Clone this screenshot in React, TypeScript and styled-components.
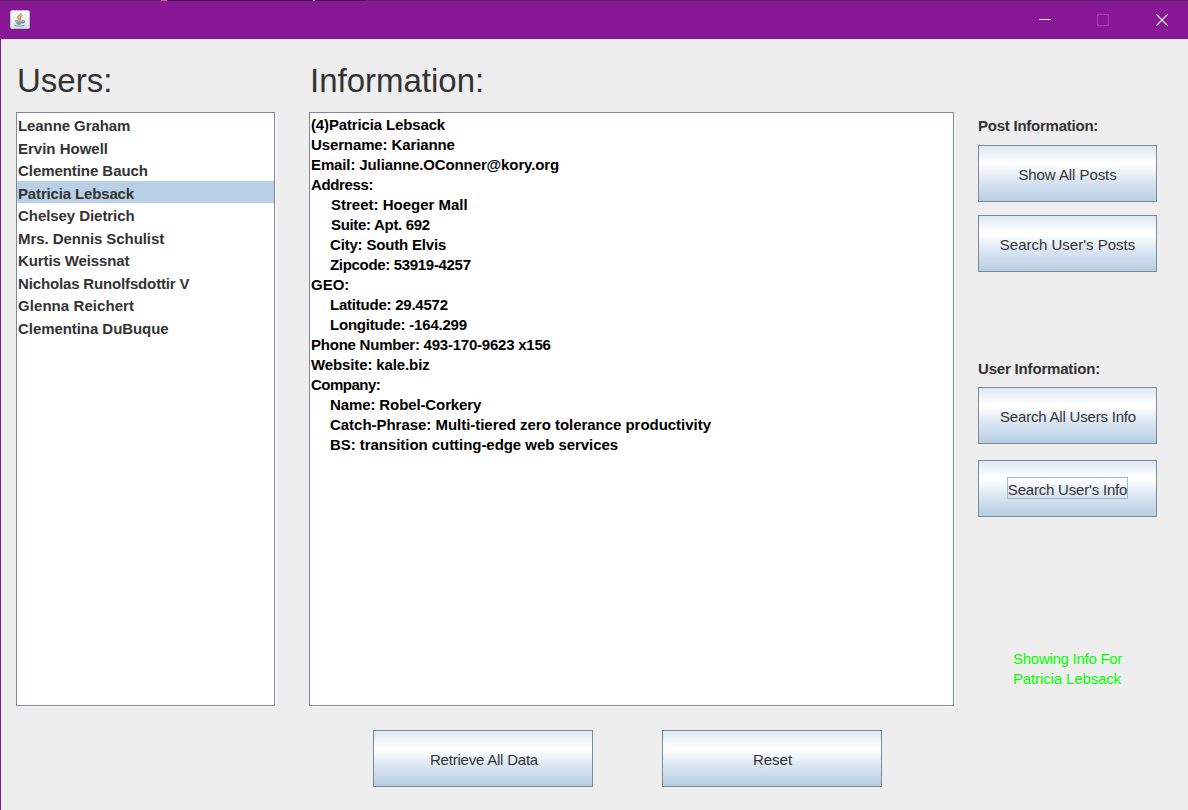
import React from "react";
import styled, { createGlobalStyle } from "styled-components";

const GlobalStyle = createGlobalStyle`
  * { box-sizing: border-box; }
  html, body { margin: 0; padding: 0; }
  body {
    width: 1188px;
    height: 810px;
    overflow: hidden;
    background: #eeeeee;
    font-family: "Liberation Sans", Arial, sans-serif;
    font-size: 15px;
    color: #333333;
  }
`;

const Window = styled.div`
  display: flex;
  flex-direction: column;
  width: 1188px;
  height: 810px;
`;

const TitleBar = styled.header`
  display: flex;
  align-items: center;
  height: 39px;
  padding: 1px 0 0 10px;
  background:
    linear-gradient(
      to right,
      #4f2457 0 161px, #c07070 161px 167px, #3a1040 167px 313px,
      #b9a0bd 313px 315px, #3a1040 315px 365px, #552a5c 365px
    ) 0 0 / 100% 1px no-repeat,
    #881796;
  flex: none;
`;

const AppIcon = styled.svg`
  display: block;
  width: 20px;
  height: 20px;
  margin-right: auto;
`;

const WindowButton = styled.button<{ $width?: number }>`
  display: flex;
  align-items: center;
  justify-content: center;
  width: ${(p) => p.$width ?? 58}px;
  height: 38px;
  padding: 0;
  border: 0;
  background: none;
`;

const Controls = styled.div`
  display: flex;
  margin-right: -4px;
`;

const Content = styled.main`
  flex: 1;
  display: grid;
  grid-template-columns: 259px 645px 179px;
  column-gap: 34px;
  grid-template-rows: 73px 594px 1fr;
  padding-left: 15px;
  border-left: 1px solid #881796;
`;

const Heading = styled.h1`
  margin: 0;
  padding: 22px 0 0 1px;
  font-size: 33px;
  line-height: 40px;
  font-weight: 400;
`;

const Panel = styled.section`
  background: #ffffff;
  border: 1px solid #7a8a99;
  box-shadow: 1px 1px 0 #ffffff;
`;

const UserList = styled(Panel)`
  display: flex;
  flex-direction: column;
`;

const UserRow = styled.div<{ $selected?: boolean; $track: number }>`
  height: 22.5px;
  padding: 2px 0 0 1px;
  line-height: 22px;
  font-weight: 700;
  letter-spacing: ${(p) => p.$track}px;
  white-space: nowrap;
  background: ${(p) => (p.$selected ? "#b8cfe5" : "transparent")};
`;

const InfoLine = styled.div<{ $indent: number; $track: number }>`
  height: 20px;
  line-height: 24px;
  padding-left: ${(p) => p.$indent}px;
  font-weight: 700;
  letter-spacing: ${(p) => p.$track}px;
  color: #000000;
  white-space: nowrap;
`;

const Sidebar = styled.aside`
  display: flex;
  flex-direction: column;
  margin-left: -10px;
  width: 179px;
`;

const Label = styled.h2<{ $top: number; $track: number }>`
  margin: 0;
  height: 33px;
  padding-top: ${(p) => p.$top}px;
  font-size: 15px;
  line-height: 20px;
  font-weight: 700;
  letter-spacing: ${(p) => p.$track}px;
  white-space: nowrap;
`;

const Group = styled.div<{ $gap: number; $height: number }>`
  display: flex;
  flex-direction: column;
  height: ${(p) => p.$height}px;
  button + button { margin-top: ${(p) => p.$gap}px; }
`;

const MetalButton = styled.button<{ $width: number }>`
  display: flex;
  align-items: center;
  justify-content: center;
  flex: none;
  width: ${(p) => p.$width}px;
  height: 57px;
  padding: 0;
  border: 1px solid #7a8a99;
  background: linear-gradient(to bottom, #dde8f3 0%, #ffffff 30%, #ffffff 34%, #dde8f3 60%, #b8cfe5 100%);
  font: 15px "Liberation Sans", Arial, sans-serif;
  color: #333333;
  white-space: nowrap;
`;

const ButtonText = styled.span<{ $focused?: boolean; $track?: number; $lead?: number }>`
  height: 22px;
  line-height: 22px;
  margin-top: -1px;
  padding: 2px 1px 0 ${(p) => p.$lead ?? 1}px;
  letter-spacing: ${(p) => p.$track ?? 0}px;
  outline: ${(p) => (p.$focused ? "1px solid #a3b8cc" : "none")};
  outline-offset: -1px;
`;

const Status = styled.p`
  margin: 20px 0 0 35px;
  color: #00ff00;
  line-height: 20px;
  white-space: nowrap;
`;

const StatusLine = styled.span<{ $track: number }>`
  display: block;
  letter-spacing: ${(p) => p.$track}px;
`;

const BottomBar = styled.footer`
  grid-column: 1 / -1;
  display: flex;
  gap: 69px;
  padding: 24px 0 0 357px;
`;

const users = [
  { name: "Leanne Graham", track: -0.08 },
  { name: "Ervin Howell", track: 0 },
  { name: "Clementine Bauch", track: -0.06 },
  { name: "Patricia Lebsack", track: -0.15 },
  { name: "Chelsey Dietrich", track: -0.06 },
  { name: "Mrs. Dennis Schulist", track: -0.07 },
  { name: "Kurtis Weissnat", track: -0.11 },
  { name: "Nicholas Runolfsdottir V", track: -0.15 },
  { name: "Glenna Reichert", track: 0.07 },
  { name: "Clementina DuBuque", track: -0.06 },
];

const info = [
  { text: "(4)Patricia Lebsack", indent: 1, track: -0.14 },
  { text: "Username: Karianne", indent: 1, track: -0.12 },
  { text: "Email: Julianne.OConner@kory.org", indent: 1, track: -0.12 },
  { text: "Address:", indent: 1, track: -0.35 },
  { text: "Street: Hoeger Mall", indent: 21, track: 0 },
  { text: "Suite: Apt. 692", indent: 21, track: -0.32 },
  { text: "City: South Elvis", indent: 20, track: -0.18 },
  { text: "Zipcode: 53919-4257", indent: 20, track: -0.32 },
  { text: "GEO:", indent: 1, track: 0 },
  { text: "Latitude: 29.4572", indent: 20, track: -0.23 },
  { text: "Longitude: -164.299", indent: 20, track: -0.21 },
  { text: "Phone Number: 493-170-9623 x156", indent: 1, track: -0.23 },
  { text: "Website: kale.biz", indent: 1, track: -0.12 },
  { text: "Company:", indent: 1, track: -0.5 },
  { text: "Name: Robel-Corkery", indent: 20, track: -0.11 },
  { text: "Catch-Phrase: Multi-tiered zero tolerance productivity", indent: 20, track: -0.03 },
  { text: "BS: transition cutting-edge web services", indent: 20, track: -0.05 },
];

const JavaIcon = () => (
  <AppIcon viewBox="0 0 20 20">
    <defs>
      <linearGradient id="tile" x1="0" y1="0" x2="0" y2="1">
        <stop offset="0" stopColor="#ffffff" />
        <stop offset="1" stopColor="#d9e1e4" />
      </linearGradient>
    </defs>
    <rect x="0.5" y="0.5" width="19" height="18" rx="1.5" fill="url(#tile)" stroke="#b3c3ca" />
    <g fill="none" strokeLinecap="round">
      <path d="M11 3.4C11.4 5 7.2 5.8 7.8 7.6L9.2 9.2M12 5.6C10 6.4 10 7.2 10.6 8L10 9.2" stroke="#e58a45" strokeWidth="1.4" />
      <path d="M5.2 11H12.4M6.4 12.7H11.6M7.4 14H10.8M12.8 10.9C15.2 10.4 15 12.6 12.6 12.9" stroke="#587c94" strokeWidth="1.1" />
      <path d="M4.4 15.4C5 16.5 12.8 16.5 14.2 15.4" stroke="#6a8ba0" strokeWidth="1" />
    </g>
  </AppIcon>
);

export default function App() {
  return (
    <>
      <GlobalStyle />
      <Window>
        <TitleBar>
          <JavaIcon />
          <Controls>
            <WindowButton aria-label="Minimize">
              <svg width="12" height="12"><path d="M0 5.5H12" stroke="#fff" /></svg>
            </WindowButton>
            <WindowButton aria-label="Maximize" disabled>
              <svg width="12" height="12"><rect x="0.5" y="0.5" width="11" height="11" fill="none" stroke="#a840b4" /></svg>
            </WindowButton>
            <WindowButton $width={60} aria-label="Close">
              <svg width="12" height="12"><path d="M0.3 0.3L11.7 11.7M11.7 0.3L0.3 11.7" stroke="#fff" strokeWidth="1.2" /></svg>
            </WindowButton>
          </Controls>
        </TitleBar>
        <Content>
          <Heading>Users:</Heading>
          <Heading>Information:</Heading>
          <div />
          <UserList>
            {users.map(({ name, track }) => (
              <UserRow key={name} $track={track} $selected={name === "Patricia Lebsack"}>{name}</UserRow>
            ))}
          </UserList>
          <Panel>
            {info.map((line) => (
              <InfoLine key={line.text} $indent={line.indent} $track={line.track}>{line.text}</InfoLine>
            ))}
          </Panel>
          <Sidebar>
            <Group $gap={13} $height={242}>
              <Label $top={4} $track={-0.24}>Post Information:</Label>
              <MetalButton $width={179}><ButtonText $track={-0.07}>Show All Posts</ButtonText></MetalButton>
              <MetalButton $width={179}><ButtonText>Search User's Posts</ButtonText></MetalButton>
            </Group>
            <Group $gap={16} $height={275}>
              <Label $top={5} $track={-0.18}>User Information:</Label>
              <MetalButton $width={179}><ButtonText $lead={2} $track={-0.2}>Search All Users Info</ButtonText></MetalButton>
              <MetalButton $width={179}><ButtonText $focused $track={-0.2}>Search User's Info</ButtonText></MetalButton>
            </Group>
            <Status>
              <StatusLine $track={-0.27}>Showing Info For</StatusLine>
              <StatusLine $track={-0.13}>Patricia Lebsack</StatusLine>
            </Status>
          </Sidebar>
          <BottomBar>
            <MetalButton $width={220}><ButtonText $lead={3} $track={-0.22}>Retrieve All Data</ButtonText></MetalButton>
            <MetalButton $width={220}><ButtonText $lead={2}>Reset</ButtonText></MetalButton>
          </BottomBar>
        </Content>
      </Window>
    </>
  );
}
